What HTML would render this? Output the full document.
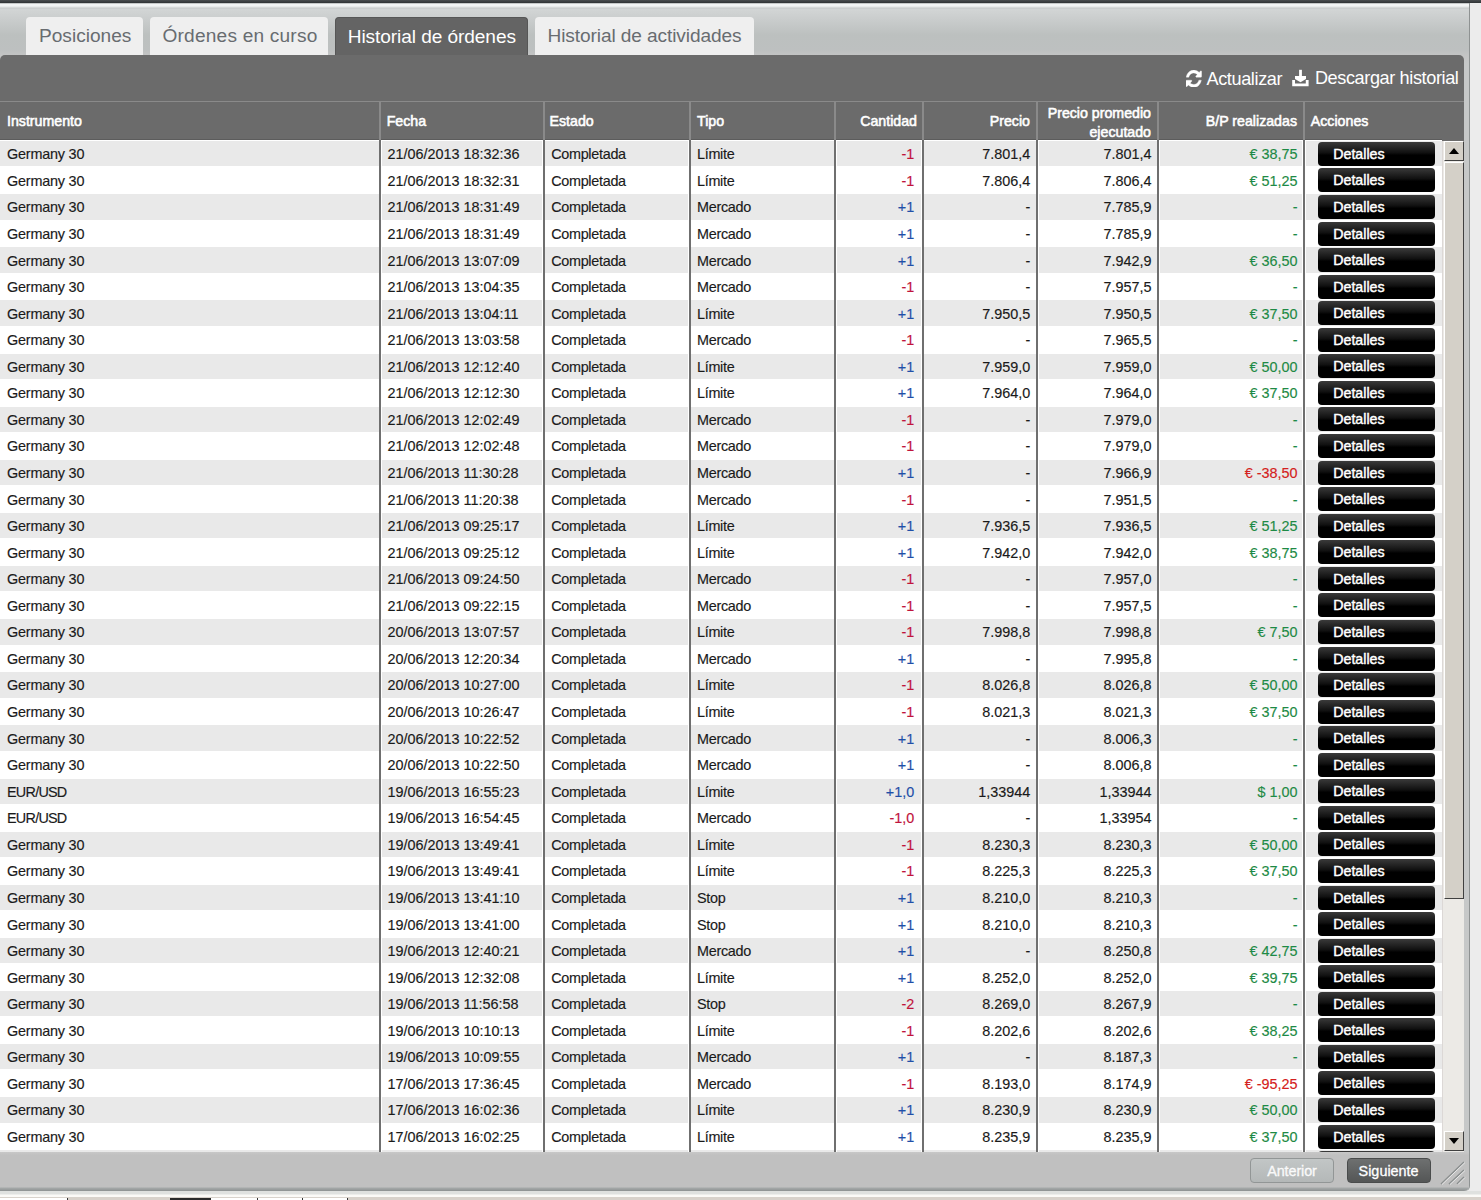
<!DOCTYPE html>
<html><head><meta charset="utf-8"><title>Historial de órdenes</title>
<style>
*{margin:0;padding:0;box-sizing:border-box}
html,body{width:1481px;height:1200px;overflow:hidden;background:#ececec;font-family:"Liberation Sans",sans-serif}
.abs{position:absolute}
#topbar{position:absolute;left:0;top:0;width:1481px;height:3px;background:linear-gradient(#4a4e50,#2f3335)}
#win{position:absolute;left:0;top:3px;width:1470px;height:1188px;background:linear-gradient(#9a9e9e 0,#f2f4f4 1px,#f2f4f4 3px,#d6d9d9 4.5px,#cbcece 5.5px,#d2d5d5 6.5px,#c9cccc 17px,#bcc0bf 32px,#bdc0c0 47px,#c3c4c4 52px,#c6c8c8 60px,#c6c8c8 100%);border-right:1px solid #8e9292;border-bottom-right-radius:5px}
#bottomstrip{position:absolute;left:0;top:1191px;width:1481px;height:9px;background:linear-gradient(#dfe1df 0,#dfe1df 3px,#fbfaf7 4px,#fbfaf7 6px,#d8d2cb 6.5px)}
.tab{position:absolute;top:17px;height:38px;background:#efefef;border-radius:4px 4px 0 0;color:#686c70;font-size:19.1px;line-height:38px;padding-left:12.5px;white-space:nowrap}
.tab.act{background:#646464;color:#fff;border:1px solid #565656;border-bottom:none;padding-left:12px;line-height:37px}
.tab.act:after{content:"";position:absolute;left:-1px;right:-1px;bottom:-1px;height:1.5px;background:#858585}
#panel{position:absolute;left:0;top:55px;width:1464px;height:1097px;background:#6b6b6b;border-radius:5px 5px 0 0}
.tool{position:absolute;top:66.5px;height:24px;color:#fff;font-size:18.1px;letter-spacing:-0.38px;line-height:24px;white-space:nowrap}
#hdrline{position:absolute;left:0;top:101px;width:1464px;height:1px;background:#8a8a8a}
.h{position:absolute;top:102px;height:38px;color:#fff;font-size:14.2px;-webkit-text-stroke:0.55px #fff;white-space:nowrap}
.h span{position:absolute;top:11px;line-height:17px}
#tbl{position:absolute;left:0;top:140px;width:1442px;height:1012px;overflow:hidden;background:#fff}
.r{position:absolute;left:0;width:1442px;height:26.56px;background:#fff}
.c{position:absolute;top:0.6px;height:25.36px}
.r.g .c{background:#e9e9e9}
.w{letter-spacing:-0.3px}
.t{position:absolute;top:1.2px;-webkit-text-stroke:0.15px;line-height:25.56px;font-size:14.4px;color:#1a1a1a;white-space:nowrap}
.neg{color:#c0143c}
.pos{color:#1f4fa8}
.grn{color:#1e8a45}
.red{color:#d42020}
.btn{position:absolute;left:12.8px;top:0.8px;width:116.5px;height:24px;border-radius:4px;background:linear-gradient(#3a3a3a 0,#101010 45%,#000 55%,#000 100%);color:#fff;font-size:14.2px;line-height:24px;padding-left:15px;-webkit-text-stroke:0.45px #fff;white-space:nowrap}
.dv{position:absolute;top:140px;width:2px;height:1012px;background:#6f6f6f}
.dvh{position:absolute;top:102px;width:2px;height:38px;background:#8a8a8a}
#sb{position:absolute;left:1442px;top:141px;width:22px;height:1011px;background:#eceae6;border-left:1px solid #dcd8d6}
.sbb{position:absolute;left:1px;width:20px;height:20px;background:#d4d0c8;border-top:1px solid #fff;border-left:1px solid #fff;border-right:1.5px solid #404040;border-bottom:1.5px solid #404040}
#thumb{position:absolute;left:1px;top:21px;width:20px;height:737px;background:#d4d0c8;border-top:1px solid #fff;border-left:1px solid #fff;border-right:1.5px solid #404040;border-bottom:1.5px solid #404040}
#footer{position:absolute;left:0;top:1152px;width:1469px;height:39px;background:linear-gradient(#c8c8c8 0,#c0c0c0 3px,#c0c0c0 35px,#a5a9a9 36px,#8d9191 39px);border-bottom-right-radius:5px}
.fb{position:absolute;top:6px;height:25px;border-radius:4px;font-size:14.4px;line-height:24.5px;text-align:center;color:#fff;-webkit-text-stroke:0.3px #fff}
</style></head><body>
<div id="topbar"></div>
<div id="win"></div>
<div id="bottomstrip"></div>
<div style="position:absolute;left:0;top:1197.5px;width:67px;height:3px;background:#fff"></div>
<div style="position:absolute;left:67px;top:1197.5px;width:1px;height:3px;background:#333"></div>
<div style="position:absolute;left:169.5px;top:1198px;width:41.5px;height:2px;background:#2b2b2b"></div>
<div style="position:absolute;left:211px;top:1197.5px;width:136px;height:3px;background:#fff"></div>
<div style="position:absolute;left:257px;top:1198px;width:1px;height:2px;background:#333"></div>
<div style="position:absolute;left:302px;top:1198px;width:1px;height:2px;background:#333"></div>
<div style="position:absolute;left:347px;top:1198px;width:1px;height:2px;background:#333"></div>
<div class="tab" style="left:25.8px;width:117.6px;padding-left:13.2px">Posiciones</div>
<div class="tab" style="left:150px;width:178px;letter-spacing:0.2px">Órdenes en curso</div>
<div class="tab act" style="left:334.7px;width:193px;letter-spacing:-0.08px">Historial de órdenes</div>
<div class="tab" style="left:535px;width:219px;letter-spacing:-0.1px">Historial de actividades</div>
<div id="panel"></div>
<div class="tool" style="left:1186px;width:100px">
 <svg style="position:absolute;left:0;top:3.6px" width="15.6" height="17.4" viewBox="0 0 1536 1536" preserveAspectRatio="none"><path fill="#fff" stroke="#fff" stroke-width="30" d="M1511 928q0 5-1 7-64 268-268 434.5t-478 166.5q-146 0-282.5-55t-243.5-157l-129 129q-19 19-45 19t-45-19-19-45v-448q0-26 19-45t45-19h448q26 0 45 19t19 45-19 45l-137 137q71 66 161 102t187 36q134 0 250-65t186-179q11-17 53-117 8-23 30-23h192q13 0 22.5 9.5t9.5 22.5zm25-800v448q0 26-19 45t-45 19h-448q-26 0-45-19t-19-45 19-45l138-138q-148-137-349-137-134 0-250 65t-186 179q-11 17-53 117-8 23-30 23h-199q-13 0-22.5-9.5t-9.5-22.5v-7q65-268 270-434.5t480-166.5q146 0 284 55.5t245 156.5l130-129q19-19 45-19t45 19 19 45z"/></svg>
 <span style="position:absolute;left:20.5px;top:0">Actualizar</span>
</div>
<div class="tool" style="left:1292px;width:170px;top:66px">
 <svg style="position:absolute;left:0;top:3px" width="18" height="19" viewBox="0 0 18 19"><rect x="7.1" y="0.8" width="2.8" height="7.5" fill="#fff"/><path d="M3 7h11v3l-5.5 3.2L3 10z" fill="#fff"/><path d="M0.2 11.1h2.8v3.4h10.8v-3.4h2.8v6.2H0.2z" fill="#fff"/></svg>
 <span style="position:absolute;right:3.5px;top:0">Descargar historial</span>
</div>
<div id="hdrline"></div><div style="position:absolute;left:0;top:139px;width:1442px;height:1px;background:#5c5c5c"></div>
<div class="h" style="left:0;width:379px"><span style="left:7px">Instrumento</span></div>
<div class="h" style="left:381px;width:162px"><span style="left:5.7px">Fecha</span></div>
<div class="h" style="left:545px;width:144px"><span style="left:4.5px">Estado</span></div>
<div class="h" style="left:691px;width:144px"><span style="left:6px">Tipo</span></div>
<div class="h" style="left:837px;width:85px"><span style="right:5px">Cantidad</span></div>
<div class="h" style="left:924px;width:113px"><span style="right:7px">Precio</span></div>
<div class="h" style="left:1039px;width:119px"><span style="right:7px;top:2px;text-align:right;line-height:19px">Precio promedio<br>ejecutado</span></div>
<div class="h" style="left:1160px;width:144px"><span style="right:7px">B/P realizadas</span></div>
<div class="h" style="left:1306px;width:136px"><span style="left:4.8px">Acciones</span></div>
<div id="tbl">
<div style="position:absolute;left:0;top:-140px;width:1442px;height:1300px">
<div class="r g" style="top:140.50px"><div class="c" style="left:0;width:379.0px"><span class="t" style="left:7px;letter-spacing:-0.2px">Germany 30</span></div><div class="c" style="left:381.5px;width:160.7px"><span class="t" style="left:6px">21/06/2013 18:32:36</span></div><div class="c" style="left:545.2px;width:142.8px"><span class="t w" style="left:6px">Completada</span></div><div class="c" style="left:691.0px;width:142.7px"><span class="t w" style="left:6px">Límite</span></div><div class="c" style="left:836.7px;width:84.5px"><span class="t rt neg" style="right:7px">-1</span></div><div class="c" style="left:924.2px;width:111.5px"><span class="t rt" style="right:5.5px">7.801,4</span></div><div class="c" style="left:1038.7px;width:117.9px"><span class="t rt" style="right:5px">7.801,4</span></div><div class="c" style="left:1159.6px;width:142.9px"><span class="t rt grn" style="right:5px">€ 38,75</span></div><div class="c" style="left:1305.5px;width:136.5px"><span class="btn">Detalles</span></div></div><div class="r" style="top:167.06px"><div class="c" style="left:0;width:379.0px"><span class="t" style="left:7px;letter-spacing:-0.2px">Germany 30</span></div><div class="c" style="left:381.5px;width:160.7px"><span class="t" style="left:6px">21/06/2013 18:32:31</span></div><div class="c" style="left:545.2px;width:142.8px"><span class="t w" style="left:6px">Completada</span></div><div class="c" style="left:691.0px;width:142.7px"><span class="t w" style="left:6px">Límite</span></div><div class="c" style="left:836.7px;width:84.5px"><span class="t rt neg" style="right:7px">-1</span></div><div class="c" style="left:924.2px;width:111.5px"><span class="t rt" style="right:5.5px">7.806,4</span></div><div class="c" style="left:1038.7px;width:117.9px"><span class="t rt" style="right:5px">7.806,4</span></div><div class="c" style="left:1159.6px;width:142.9px"><span class="t rt grn" style="right:5px">€ 51,25</span></div><div class="c" style="left:1305.5px;width:136.5px"><span class="btn">Detalles</span></div></div><div class="r g" style="top:193.62px"><div class="c" style="left:0;width:379.0px"><span class="t" style="left:7px;letter-spacing:-0.2px">Germany 30</span></div><div class="c" style="left:381.5px;width:160.7px"><span class="t" style="left:6px">21/06/2013 18:31:49</span></div><div class="c" style="left:545.2px;width:142.8px"><span class="t w" style="left:6px">Completada</span></div><div class="c" style="left:691.0px;width:142.7px"><span class="t w" style="left:6px">Mercado</span></div><div class="c" style="left:836.7px;width:84.5px"><span class="t rt pos" style="right:7px">+1</span></div><div class="c" style="left:924.2px;width:111.5px"><span class="t rt" style="right:5.5px">-</span></div><div class="c" style="left:1038.7px;width:117.9px"><span class="t rt" style="right:5px">7.785,9</span></div><div class="c" style="left:1159.6px;width:142.9px"><span class="t rt grn" style="right:5px">-</span></div><div class="c" style="left:1305.5px;width:136.5px"><span class="btn">Detalles</span></div></div><div class="r" style="top:220.18px"><div class="c" style="left:0;width:379.0px"><span class="t" style="left:7px;letter-spacing:-0.2px">Germany 30</span></div><div class="c" style="left:381.5px;width:160.7px"><span class="t" style="left:6px">21/06/2013 18:31:49</span></div><div class="c" style="left:545.2px;width:142.8px"><span class="t w" style="left:6px">Completada</span></div><div class="c" style="left:691.0px;width:142.7px"><span class="t w" style="left:6px">Mercado</span></div><div class="c" style="left:836.7px;width:84.5px"><span class="t rt pos" style="right:7px">+1</span></div><div class="c" style="left:924.2px;width:111.5px"><span class="t rt" style="right:5.5px">-</span></div><div class="c" style="left:1038.7px;width:117.9px"><span class="t rt" style="right:5px">7.785,9</span></div><div class="c" style="left:1159.6px;width:142.9px"><span class="t rt grn" style="right:5px">-</span></div><div class="c" style="left:1305.5px;width:136.5px"><span class="btn">Detalles</span></div></div><div class="r g" style="top:246.74px"><div class="c" style="left:0;width:379.0px"><span class="t" style="left:7px;letter-spacing:-0.2px">Germany 30</span></div><div class="c" style="left:381.5px;width:160.7px"><span class="t" style="left:6px">21/06/2013 13:07:09</span></div><div class="c" style="left:545.2px;width:142.8px"><span class="t w" style="left:6px">Completada</span></div><div class="c" style="left:691.0px;width:142.7px"><span class="t w" style="left:6px">Mercado</span></div><div class="c" style="left:836.7px;width:84.5px"><span class="t rt pos" style="right:7px">+1</span></div><div class="c" style="left:924.2px;width:111.5px"><span class="t rt" style="right:5.5px">-</span></div><div class="c" style="left:1038.7px;width:117.9px"><span class="t rt" style="right:5px">7.942,9</span></div><div class="c" style="left:1159.6px;width:142.9px"><span class="t rt grn" style="right:5px">€ 36,50</span></div><div class="c" style="left:1305.5px;width:136.5px"><span class="btn">Detalles</span></div></div><div class="r" style="top:273.30px"><div class="c" style="left:0;width:379.0px"><span class="t" style="left:7px;letter-spacing:-0.2px">Germany 30</span></div><div class="c" style="left:381.5px;width:160.7px"><span class="t" style="left:6px">21/06/2013 13:04:35</span></div><div class="c" style="left:545.2px;width:142.8px"><span class="t w" style="left:6px">Completada</span></div><div class="c" style="left:691.0px;width:142.7px"><span class="t w" style="left:6px">Mercado</span></div><div class="c" style="left:836.7px;width:84.5px"><span class="t rt neg" style="right:7px">-1</span></div><div class="c" style="left:924.2px;width:111.5px"><span class="t rt" style="right:5.5px">-</span></div><div class="c" style="left:1038.7px;width:117.9px"><span class="t rt" style="right:5px">7.957,5</span></div><div class="c" style="left:1159.6px;width:142.9px"><span class="t rt grn" style="right:5px">-</span></div><div class="c" style="left:1305.5px;width:136.5px"><span class="btn">Detalles</span></div></div><div class="r g" style="top:299.86px"><div class="c" style="left:0;width:379.0px"><span class="t" style="left:7px;letter-spacing:-0.2px">Germany 30</span></div><div class="c" style="left:381.5px;width:160.7px"><span class="t" style="left:6px">21/06/2013 13:04:11</span></div><div class="c" style="left:545.2px;width:142.8px"><span class="t w" style="left:6px">Completada</span></div><div class="c" style="left:691.0px;width:142.7px"><span class="t w" style="left:6px">Límite</span></div><div class="c" style="left:836.7px;width:84.5px"><span class="t rt pos" style="right:7px">+1</span></div><div class="c" style="left:924.2px;width:111.5px"><span class="t rt" style="right:5.5px">7.950,5</span></div><div class="c" style="left:1038.7px;width:117.9px"><span class="t rt" style="right:5px">7.950,5</span></div><div class="c" style="left:1159.6px;width:142.9px"><span class="t rt grn" style="right:5px">€ 37,50</span></div><div class="c" style="left:1305.5px;width:136.5px"><span class="btn">Detalles</span></div></div><div class="r" style="top:326.42px"><div class="c" style="left:0;width:379.0px"><span class="t" style="left:7px;letter-spacing:-0.2px">Germany 30</span></div><div class="c" style="left:381.5px;width:160.7px"><span class="t" style="left:6px">21/06/2013 13:03:58</span></div><div class="c" style="left:545.2px;width:142.8px"><span class="t w" style="left:6px">Completada</span></div><div class="c" style="left:691.0px;width:142.7px"><span class="t w" style="left:6px">Mercado</span></div><div class="c" style="left:836.7px;width:84.5px"><span class="t rt neg" style="right:7px">-1</span></div><div class="c" style="left:924.2px;width:111.5px"><span class="t rt" style="right:5.5px">-</span></div><div class="c" style="left:1038.7px;width:117.9px"><span class="t rt" style="right:5px">7.965,5</span></div><div class="c" style="left:1159.6px;width:142.9px"><span class="t rt grn" style="right:5px">-</span></div><div class="c" style="left:1305.5px;width:136.5px"><span class="btn">Detalles</span></div></div><div class="r g" style="top:352.98px"><div class="c" style="left:0;width:379.0px"><span class="t" style="left:7px;letter-spacing:-0.2px">Germany 30</span></div><div class="c" style="left:381.5px;width:160.7px"><span class="t" style="left:6px">21/06/2013 12:12:40</span></div><div class="c" style="left:545.2px;width:142.8px"><span class="t w" style="left:6px">Completada</span></div><div class="c" style="left:691.0px;width:142.7px"><span class="t w" style="left:6px">Límite</span></div><div class="c" style="left:836.7px;width:84.5px"><span class="t rt pos" style="right:7px">+1</span></div><div class="c" style="left:924.2px;width:111.5px"><span class="t rt" style="right:5.5px">7.959,0</span></div><div class="c" style="left:1038.7px;width:117.9px"><span class="t rt" style="right:5px">7.959,0</span></div><div class="c" style="left:1159.6px;width:142.9px"><span class="t rt grn" style="right:5px">€ 50,00</span></div><div class="c" style="left:1305.5px;width:136.5px"><span class="btn">Detalles</span></div></div><div class="r" style="top:379.54px"><div class="c" style="left:0;width:379.0px"><span class="t" style="left:7px;letter-spacing:-0.2px">Germany 30</span></div><div class="c" style="left:381.5px;width:160.7px"><span class="t" style="left:6px">21/06/2013 12:12:30</span></div><div class="c" style="left:545.2px;width:142.8px"><span class="t w" style="left:6px">Completada</span></div><div class="c" style="left:691.0px;width:142.7px"><span class="t w" style="left:6px">Límite</span></div><div class="c" style="left:836.7px;width:84.5px"><span class="t rt pos" style="right:7px">+1</span></div><div class="c" style="left:924.2px;width:111.5px"><span class="t rt" style="right:5.5px">7.964,0</span></div><div class="c" style="left:1038.7px;width:117.9px"><span class="t rt" style="right:5px">7.964,0</span></div><div class="c" style="left:1159.6px;width:142.9px"><span class="t rt grn" style="right:5px">€ 37,50</span></div><div class="c" style="left:1305.5px;width:136.5px"><span class="btn">Detalles</span></div></div><div class="r g" style="top:406.10px"><div class="c" style="left:0;width:379.0px"><span class="t" style="left:7px;letter-spacing:-0.2px">Germany 30</span></div><div class="c" style="left:381.5px;width:160.7px"><span class="t" style="left:6px">21/06/2013 12:02:49</span></div><div class="c" style="left:545.2px;width:142.8px"><span class="t w" style="left:6px">Completada</span></div><div class="c" style="left:691.0px;width:142.7px"><span class="t w" style="left:6px">Mercado</span></div><div class="c" style="left:836.7px;width:84.5px"><span class="t rt neg" style="right:7px">-1</span></div><div class="c" style="left:924.2px;width:111.5px"><span class="t rt" style="right:5.5px">-</span></div><div class="c" style="left:1038.7px;width:117.9px"><span class="t rt" style="right:5px">7.979,0</span></div><div class="c" style="left:1159.6px;width:142.9px"><span class="t rt grn" style="right:5px">-</span></div><div class="c" style="left:1305.5px;width:136.5px"><span class="btn">Detalles</span></div></div><div class="r" style="top:432.66px"><div class="c" style="left:0;width:379.0px"><span class="t" style="left:7px;letter-spacing:-0.2px">Germany 30</span></div><div class="c" style="left:381.5px;width:160.7px"><span class="t" style="left:6px">21/06/2013 12:02:48</span></div><div class="c" style="left:545.2px;width:142.8px"><span class="t w" style="left:6px">Completada</span></div><div class="c" style="left:691.0px;width:142.7px"><span class="t w" style="left:6px">Mercado</span></div><div class="c" style="left:836.7px;width:84.5px"><span class="t rt neg" style="right:7px">-1</span></div><div class="c" style="left:924.2px;width:111.5px"><span class="t rt" style="right:5.5px">-</span></div><div class="c" style="left:1038.7px;width:117.9px"><span class="t rt" style="right:5px">7.979,0</span></div><div class="c" style="left:1159.6px;width:142.9px"><span class="t rt grn" style="right:5px">-</span></div><div class="c" style="left:1305.5px;width:136.5px"><span class="btn">Detalles</span></div></div><div class="r g" style="top:459.22px"><div class="c" style="left:0;width:379.0px"><span class="t" style="left:7px;letter-spacing:-0.2px">Germany 30</span></div><div class="c" style="left:381.5px;width:160.7px"><span class="t" style="left:6px">21/06/2013 11:30:28</span></div><div class="c" style="left:545.2px;width:142.8px"><span class="t w" style="left:6px">Completada</span></div><div class="c" style="left:691.0px;width:142.7px"><span class="t w" style="left:6px">Mercado</span></div><div class="c" style="left:836.7px;width:84.5px"><span class="t rt pos" style="right:7px">+1</span></div><div class="c" style="left:924.2px;width:111.5px"><span class="t rt" style="right:5.5px">-</span></div><div class="c" style="left:1038.7px;width:117.9px"><span class="t rt" style="right:5px">7.966,9</span></div><div class="c" style="left:1159.6px;width:142.9px"><span class="t rt red" style="right:5px">€ -38,50</span></div><div class="c" style="left:1305.5px;width:136.5px"><span class="btn">Detalles</span></div></div><div class="r" style="top:485.78px"><div class="c" style="left:0;width:379.0px"><span class="t" style="left:7px;letter-spacing:-0.2px">Germany 30</span></div><div class="c" style="left:381.5px;width:160.7px"><span class="t" style="left:6px">21/06/2013 11:20:38</span></div><div class="c" style="left:545.2px;width:142.8px"><span class="t w" style="left:6px">Completada</span></div><div class="c" style="left:691.0px;width:142.7px"><span class="t w" style="left:6px">Mercado</span></div><div class="c" style="left:836.7px;width:84.5px"><span class="t rt neg" style="right:7px">-1</span></div><div class="c" style="left:924.2px;width:111.5px"><span class="t rt" style="right:5.5px">-</span></div><div class="c" style="left:1038.7px;width:117.9px"><span class="t rt" style="right:5px">7.951,5</span></div><div class="c" style="left:1159.6px;width:142.9px"><span class="t rt grn" style="right:5px">-</span></div><div class="c" style="left:1305.5px;width:136.5px"><span class="btn">Detalles</span></div></div><div class="r g" style="top:512.34px"><div class="c" style="left:0;width:379.0px"><span class="t" style="left:7px;letter-spacing:-0.2px">Germany 30</span></div><div class="c" style="left:381.5px;width:160.7px"><span class="t" style="left:6px">21/06/2013 09:25:17</span></div><div class="c" style="left:545.2px;width:142.8px"><span class="t w" style="left:6px">Completada</span></div><div class="c" style="left:691.0px;width:142.7px"><span class="t w" style="left:6px">Límite</span></div><div class="c" style="left:836.7px;width:84.5px"><span class="t rt pos" style="right:7px">+1</span></div><div class="c" style="left:924.2px;width:111.5px"><span class="t rt" style="right:5.5px">7.936,5</span></div><div class="c" style="left:1038.7px;width:117.9px"><span class="t rt" style="right:5px">7.936,5</span></div><div class="c" style="left:1159.6px;width:142.9px"><span class="t rt grn" style="right:5px">€ 51,25</span></div><div class="c" style="left:1305.5px;width:136.5px"><span class="btn">Detalles</span></div></div><div class="r" style="top:538.90px"><div class="c" style="left:0;width:379.0px"><span class="t" style="left:7px;letter-spacing:-0.2px">Germany 30</span></div><div class="c" style="left:381.5px;width:160.7px"><span class="t" style="left:6px">21/06/2013 09:25:12</span></div><div class="c" style="left:545.2px;width:142.8px"><span class="t w" style="left:6px">Completada</span></div><div class="c" style="left:691.0px;width:142.7px"><span class="t w" style="left:6px">Límite</span></div><div class="c" style="left:836.7px;width:84.5px"><span class="t rt pos" style="right:7px">+1</span></div><div class="c" style="left:924.2px;width:111.5px"><span class="t rt" style="right:5.5px">7.942,0</span></div><div class="c" style="left:1038.7px;width:117.9px"><span class="t rt" style="right:5px">7.942,0</span></div><div class="c" style="left:1159.6px;width:142.9px"><span class="t rt grn" style="right:5px">€ 38,75</span></div><div class="c" style="left:1305.5px;width:136.5px"><span class="btn">Detalles</span></div></div><div class="r g" style="top:565.46px"><div class="c" style="left:0;width:379.0px"><span class="t" style="left:7px;letter-spacing:-0.2px">Germany 30</span></div><div class="c" style="left:381.5px;width:160.7px"><span class="t" style="left:6px">21/06/2013 09:24:50</span></div><div class="c" style="left:545.2px;width:142.8px"><span class="t w" style="left:6px">Completada</span></div><div class="c" style="left:691.0px;width:142.7px"><span class="t w" style="left:6px">Mercado</span></div><div class="c" style="left:836.7px;width:84.5px"><span class="t rt neg" style="right:7px">-1</span></div><div class="c" style="left:924.2px;width:111.5px"><span class="t rt" style="right:5.5px">-</span></div><div class="c" style="left:1038.7px;width:117.9px"><span class="t rt" style="right:5px">7.957,0</span></div><div class="c" style="left:1159.6px;width:142.9px"><span class="t rt grn" style="right:5px">-</span></div><div class="c" style="left:1305.5px;width:136.5px"><span class="btn">Detalles</span></div></div><div class="r" style="top:592.02px"><div class="c" style="left:0;width:379.0px"><span class="t" style="left:7px;letter-spacing:-0.2px">Germany 30</span></div><div class="c" style="left:381.5px;width:160.7px"><span class="t" style="left:6px">21/06/2013 09:22:15</span></div><div class="c" style="left:545.2px;width:142.8px"><span class="t w" style="left:6px">Completada</span></div><div class="c" style="left:691.0px;width:142.7px"><span class="t w" style="left:6px">Mercado</span></div><div class="c" style="left:836.7px;width:84.5px"><span class="t rt neg" style="right:7px">-1</span></div><div class="c" style="left:924.2px;width:111.5px"><span class="t rt" style="right:5.5px">-</span></div><div class="c" style="left:1038.7px;width:117.9px"><span class="t rt" style="right:5px">7.957,5</span></div><div class="c" style="left:1159.6px;width:142.9px"><span class="t rt grn" style="right:5px">-</span></div><div class="c" style="left:1305.5px;width:136.5px"><span class="btn">Detalles</span></div></div><div class="r g" style="top:618.58px"><div class="c" style="left:0;width:379.0px"><span class="t" style="left:7px;letter-spacing:-0.2px">Germany 30</span></div><div class="c" style="left:381.5px;width:160.7px"><span class="t" style="left:6px">20/06/2013 13:07:57</span></div><div class="c" style="left:545.2px;width:142.8px"><span class="t w" style="left:6px">Completada</span></div><div class="c" style="left:691.0px;width:142.7px"><span class="t w" style="left:6px">Límite</span></div><div class="c" style="left:836.7px;width:84.5px"><span class="t rt neg" style="right:7px">-1</span></div><div class="c" style="left:924.2px;width:111.5px"><span class="t rt" style="right:5.5px">7.998,8</span></div><div class="c" style="left:1038.7px;width:117.9px"><span class="t rt" style="right:5px">7.998,8</span></div><div class="c" style="left:1159.6px;width:142.9px"><span class="t rt grn" style="right:5px">€ 7,50</span></div><div class="c" style="left:1305.5px;width:136.5px"><span class="btn">Detalles</span></div></div><div class="r" style="top:645.14px"><div class="c" style="left:0;width:379.0px"><span class="t" style="left:7px;letter-spacing:-0.2px">Germany 30</span></div><div class="c" style="left:381.5px;width:160.7px"><span class="t" style="left:6px">20/06/2013 12:20:34</span></div><div class="c" style="left:545.2px;width:142.8px"><span class="t w" style="left:6px">Completada</span></div><div class="c" style="left:691.0px;width:142.7px"><span class="t w" style="left:6px">Mercado</span></div><div class="c" style="left:836.7px;width:84.5px"><span class="t rt pos" style="right:7px">+1</span></div><div class="c" style="left:924.2px;width:111.5px"><span class="t rt" style="right:5.5px">-</span></div><div class="c" style="left:1038.7px;width:117.9px"><span class="t rt" style="right:5px">7.995,8</span></div><div class="c" style="left:1159.6px;width:142.9px"><span class="t rt grn" style="right:5px">-</span></div><div class="c" style="left:1305.5px;width:136.5px"><span class="btn">Detalles</span></div></div><div class="r g" style="top:671.70px"><div class="c" style="left:0;width:379.0px"><span class="t" style="left:7px;letter-spacing:-0.2px">Germany 30</span></div><div class="c" style="left:381.5px;width:160.7px"><span class="t" style="left:6px">20/06/2013 10:27:00</span></div><div class="c" style="left:545.2px;width:142.8px"><span class="t w" style="left:6px">Completada</span></div><div class="c" style="left:691.0px;width:142.7px"><span class="t w" style="left:6px">Límite</span></div><div class="c" style="left:836.7px;width:84.5px"><span class="t rt neg" style="right:7px">-1</span></div><div class="c" style="left:924.2px;width:111.5px"><span class="t rt" style="right:5.5px">8.026,8</span></div><div class="c" style="left:1038.7px;width:117.9px"><span class="t rt" style="right:5px">8.026,8</span></div><div class="c" style="left:1159.6px;width:142.9px"><span class="t rt grn" style="right:5px">€ 50,00</span></div><div class="c" style="left:1305.5px;width:136.5px"><span class="btn">Detalles</span></div></div><div class="r" style="top:698.26px"><div class="c" style="left:0;width:379.0px"><span class="t" style="left:7px;letter-spacing:-0.2px">Germany 30</span></div><div class="c" style="left:381.5px;width:160.7px"><span class="t" style="left:6px">20/06/2013 10:26:47</span></div><div class="c" style="left:545.2px;width:142.8px"><span class="t w" style="left:6px">Completada</span></div><div class="c" style="left:691.0px;width:142.7px"><span class="t w" style="left:6px">Límite</span></div><div class="c" style="left:836.7px;width:84.5px"><span class="t rt neg" style="right:7px">-1</span></div><div class="c" style="left:924.2px;width:111.5px"><span class="t rt" style="right:5.5px">8.021,3</span></div><div class="c" style="left:1038.7px;width:117.9px"><span class="t rt" style="right:5px">8.021,3</span></div><div class="c" style="left:1159.6px;width:142.9px"><span class="t rt grn" style="right:5px">€ 37,50</span></div><div class="c" style="left:1305.5px;width:136.5px"><span class="btn">Detalles</span></div></div><div class="r g" style="top:724.82px"><div class="c" style="left:0;width:379.0px"><span class="t" style="left:7px;letter-spacing:-0.2px">Germany 30</span></div><div class="c" style="left:381.5px;width:160.7px"><span class="t" style="left:6px">20/06/2013 10:22:52</span></div><div class="c" style="left:545.2px;width:142.8px"><span class="t w" style="left:6px">Completada</span></div><div class="c" style="left:691.0px;width:142.7px"><span class="t w" style="left:6px">Mercado</span></div><div class="c" style="left:836.7px;width:84.5px"><span class="t rt pos" style="right:7px">+1</span></div><div class="c" style="left:924.2px;width:111.5px"><span class="t rt" style="right:5.5px">-</span></div><div class="c" style="left:1038.7px;width:117.9px"><span class="t rt" style="right:5px">8.006,3</span></div><div class="c" style="left:1159.6px;width:142.9px"><span class="t rt grn" style="right:5px">-</span></div><div class="c" style="left:1305.5px;width:136.5px"><span class="btn">Detalles</span></div></div><div class="r" style="top:751.38px"><div class="c" style="left:0;width:379.0px"><span class="t" style="left:7px;letter-spacing:-0.2px">Germany 30</span></div><div class="c" style="left:381.5px;width:160.7px"><span class="t" style="left:6px">20/06/2013 10:22:50</span></div><div class="c" style="left:545.2px;width:142.8px"><span class="t w" style="left:6px">Completada</span></div><div class="c" style="left:691.0px;width:142.7px"><span class="t w" style="left:6px">Mercado</span></div><div class="c" style="left:836.7px;width:84.5px"><span class="t rt pos" style="right:7px">+1</span></div><div class="c" style="left:924.2px;width:111.5px"><span class="t rt" style="right:5.5px">-</span></div><div class="c" style="left:1038.7px;width:117.9px"><span class="t rt" style="right:5px">8.006,8</span></div><div class="c" style="left:1159.6px;width:142.9px"><span class="t rt grn" style="right:5px">-</span></div><div class="c" style="left:1305.5px;width:136.5px"><span class="btn">Detalles</span></div></div><div class="r g" style="top:777.94px"><div class="c" style="left:0;width:379.0px"><span class="t" style="left:7px;letter-spacing:-0.75px">EUR/USD</span></div><div class="c" style="left:381.5px;width:160.7px"><span class="t" style="left:6px">19/06/2013 16:55:23</span></div><div class="c" style="left:545.2px;width:142.8px"><span class="t w" style="left:6px">Completada</span></div><div class="c" style="left:691.0px;width:142.7px"><span class="t w" style="left:6px">Límite</span></div><div class="c" style="left:836.7px;width:84.5px"><span class="t rt pos" style="right:7px">+1,0</span></div><div class="c" style="left:924.2px;width:111.5px"><span class="t rt" style="right:5.5px">1,33944</span></div><div class="c" style="left:1038.7px;width:117.9px"><span class="t rt" style="right:5px">1,33944</span></div><div class="c" style="left:1159.6px;width:142.9px"><span class="t rt grn" style="right:5px">$ 1,00</span></div><div class="c" style="left:1305.5px;width:136.5px"><span class="btn">Detalles</span></div></div><div class="r" style="top:804.50px"><div class="c" style="left:0;width:379.0px"><span class="t" style="left:7px;letter-spacing:-0.75px">EUR/USD</span></div><div class="c" style="left:381.5px;width:160.7px"><span class="t" style="left:6px">19/06/2013 16:54:45</span></div><div class="c" style="left:545.2px;width:142.8px"><span class="t w" style="left:6px">Completada</span></div><div class="c" style="left:691.0px;width:142.7px"><span class="t w" style="left:6px">Mercado</span></div><div class="c" style="left:836.7px;width:84.5px"><span class="t rt neg" style="right:7px">-1,0</span></div><div class="c" style="left:924.2px;width:111.5px"><span class="t rt" style="right:5.5px">-</span></div><div class="c" style="left:1038.7px;width:117.9px"><span class="t rt" style="right:5px">1,33954</span></div><div class="c" style="left:1159.6px;width:142.9px"><span class="t rt grn" style="right:5px">-</span></div><div class="c" style="left:1305.5px;width:136.5px"><span class="btn">Detalles</span></div></div><div class="r g" style="top:831.06px"><div class="c" style="left:0;width:379.0px"><span class="t" style="left:7px;letter-spacing:-0.2px">Germany 30</span></div><div class="c" style="left:381.5px;width:160.7px"><span class="t" style="left:6px">19/06/2013 13:49:41</span></div><div class="c" style="left:545.2px;width:142.8px"><span class="t w" style="left:6px">Completada</span></div><div class="c" style="left:691.0px;width:142.7px"><span class="t w" style="left:6px">Límite</span></div><div class="c" style="left:836.7px;width:84.5px"><span class="t rt neg" style="right:7px">-1</span></div><div class="c" style="left:924.2px;width:111.5px"><span class="t rt" style="right:5.5px">8.230,3</span></div><div class="c" style="left:1038.7px;width:117.9px"><span class="t rt" style="right:5px">8.230,3</span></div><div class="c" style="left:1159.6px;width:142.9px"><span class="t rt grn" style="right:5px">€ 50,00</span></div><div class="c" style="left:1305.5px;width:136.5px"><span class="btn">Detalles</span></div></div><div class="r" style="top:857.62px"><div class="c" style="left:0;width:379.0px"><span class="t" style="left:7px;letter-spacing:-0.2px">Germany 30</span></div><div class="c" style="left:381.5px;width:160.7px"><span class="t" style="left:6px">19/06/2013 13:49:41</span></div><div class="c" style="left:545.2px;width:142.8px"><span class="t w" style="left:6px">Completada</span></div><div class="c" style="left:691.0px;width:142.7px"><span class="t w" style="left:6px">Límite</span></div><div class="c" style="left:836.7px;width:84.5px"><span class="t rt neg" style="right:7px">-1</span></div><div class="c" style="left:924.2px;width:111.5px"><span class="t rt" style="right:5.5px">8.225,3</span></div><div class="c" style="left:1038.7px;width:117.9px"><span class="t rt" style="right:5px">8.225,3</span></div><div class="c" style="left:1159.6px;width:142.9px"><span class="t rt grn" style="right:5px">€ 37,50</span></div><div class="c" style="left:1305.5px;width:136.5px"><span class="btn">Detalles</span></div></div><div class="r g" style="top:884.18px"><div class="c" style="left:0;width:379.0px"><span class="t" style="left:7px;letter-spacing:-0.2px">Germany 30</span></div><div class="c" style="left:381.5px;width:160.7px"><span class="t" style="left:6px">19/06/2013 13:41:10</span></div><div class="c" style="left:545.2px;width:142.8px"><span class="t w" style="left:6px">Completada</span></div><div class="c" style="left:691.0px;width:142.7px"><span class="t w" style="left:6px">Stop</span></div><div class="c" style="left:836.7px;width:84.5px"><span class="t rt pos" style="right:7px">+1</span></div><div class="c" style="left:924.2px;width:111.5px"><span class="t rt" style="right:5.5px">8.210,0</span></div><div class="c" style="left:1038.7px;width:117.9px"><span class="t rt" style="right:5px">8.210,3</span></div><div class="c" style="left:1159.6px;width:142.9px"><span class="t rt grn" style="right:5px">-</span></div><div class="c" style="left:1305.5px;width:136.5px"><span class="btn">Detalles</span></div></div><div class="r" style="top:910.74px"><div class="c" style="left:0;width:379.0px"><span class="t" style="left:7px;letter-spacing:-0.2px">Germany 30</span></div><div class="c" style="left:381.5px;width:160.7px"><span class="t" style="left:6px">19/06/2013 13:41:00</span></div><div class="c" style="left:545.2px;width:142.8px"><span class="t w" style="left:6px">Completada</span></div><div class="c" style="left:691.0px;width:142.7px"><span class="t w" style="left:6px">Stop</span></div><div class="c" style="left:836.7px;width:84.5px"><span class="t rt pos" style="right:7px">+1</span></div><div class="c" style="left:924.2px;width:111.5px"><span class="t rt" style="right:5.5px">8.210,0</span></div><div class="c" style="left:1038.7px;width:117.9px"><span class="t rt" style="right:5px">8.210,3</span></div><div class="c" style="left:1159.6px;width:142.9px"><span class="t rt grn" style="right:5px">-</span></div><div class="c" style="left:1305.5px;width:136.5px"><span class="btn">Detalles</span></div></div><div class="r g" style="top:937.30px"><div class="c" style="left:0;width:379.0px"><span class="t" style="left:7px;letter-spacing:-0.2px">Germany 30</span></div><div class="c" style="left:381.5px;width:160.7px"><span class="t" style="left:6px">19/06/2013 12:40:21</span></div><div class="c" style="left:545.2px;width:142.8px"><span class="t w" style="left:6px">Completada</span></div><div class="c" style="left:691.0px;width:142.7px"><span class="t w" style="left:6px">Mercado</span></div><div class="c" style="left:836.7px;width:84.5px"><span class="t rt pos" style="right:7px">+1</span></div><div class="c" style="left:924.2px;width:111.5px"><span class="t rt" style="right:5.5px">-</span></div><div class="c" style="left:1038.7px;width:117.9px"><span class="t rt" style="right:5px">8.250,8</span></div><div class="c" style="left:1159.6px;width:142.9px"><span class="t rt grn" style="right:5px">€ 42,75</span></div><div class="c" style="left:1305.5px;width:136.5px"><span class="btn">Detalles</span></div></div><div class="r" style="top:963.86px"><div class="c" style="left:0;width:379.0px"><span class="t" style="left:7px;letter-spacing:-0.2px">Germany 30</span></div><div class="c" style="left:381.5px;width:160.7px"><span class="t" style="left:6px">19/06/2013 12:32:08</span></div><div class="c" style="left:545.2px;width:142.8px"><span class="t w" style="left:6px">Completada</span></div><div class="c" style="left:691.0px;width:142.7px"><span class="t w" style="left:6px">Límite</span></div><div class="c" style="left:836.7px;width:84.5px"><span class="t rt pos" style="right:7px">+1</span></div><div class="c" style="left:924.2px;width:111.5px"><span class="t rt" style="right:5.5px">8.252,0</span></div><div class="c" style="left:1038.7px;width:117.9px"><span class="t rt" style="right:5px">8.252,0</span></div><div class="c" style="left:1159.6px;width:142.9px"><span class="t rt grn" style="right:5px">€ 39,75</span></div><div class="c" style="left:1305.5px;width:136.5px"><span class="btn">Detalles</span></div></div><div class="r g" style="top:990.42px"><div class="c" style="left:0;width:379.0px"><span class="t" style="left:7px;letter-spacing:-0.2px">Germany 30</span></div><div class="c" style="left:381.5px;width:160.7px"><span class="t" style="left:6px">19/06/2013 11:56:58</span></div><div class="c" style="left:545.2px;width:142.8px"><span class="t w" style="left:6px">Completada</span></div><div class="c" style="left:691.0px;width:142.7px"><span class="t w" style="left:6px">Stop</span></div><div class="c" style="left:836.7px;width:84.5px"><span class="t rt neg" style="right:7px">-2</span></div><div class="c" style="left:924.2px;width:111.5px"><span class="t rt" style="right:5.5px">8.269,0</span></div><div class="c" style="left:1038.7px;width:117.9px"><span class="t rt" style="right:5px">8.267,9</span></div><div class="c" style="left:1159.6px;width:142.9px"><span class="t rt grn" style="right:5px">-</span></div><div class="c" style="left:1305.5px;width:136.5px"><span class="btn">Detalles</span></div></div><div class="r" style="top:1016.98px"><div class="c" style="left:0;width:379.0px"><span class="t" style="left:7px;letter-spacing:-0.2px">Germany 30</span></div><div class="c" style="left:381.5px;width:160.7px"><span class="t" style="left:6px">19/06/2013 10:10:13</span></div><div class="c" style="left:545.2px;width:142.8px"><span class="t w" style="left:6px">Completada</span></div><div class="c" style="left:691.0px;width:142.7px"><span class="t w" style="left:6px">Límite</span></div><div class="c" style="left:836.7px;width:84.5px"><span class="t rt neg" style="right:7px">-1</span></div><div class="c" style="left:924.2px;width:111.5px"><span class="t rt" style="right:5.5px">8.202,6</span></div><div class="c" style="left:1038.7px;width:117.9px"><span class="t rt" style="right:5px">8.202,6</span></div><div class="c" style="left:1159.6px;width:142.9px"><span class="t rt grn" style="right:5px">€ 38,25</span></div><div class="c" style="left:1305.5px;width:136.5px"><span class="btn">Detalles</span></div></div><div class="r g" style="top:1043.54px"><div class="c" style="left:0;width:379.0px"><span class="t" style="left:7px;letter-spacing:-0.2px">Germany 30</span></div><div class="c" style="left:381.5px;width:160.7px"><span class="t" style="left:6px">19/06/2013 10:09:55</span></div><div class="c" style="left:545.2px;width:142.8px"><span class="t w" style="left:6px">Completada</span></div><div class="c" style="left:691.0px;width:142.7px"><span class="t w" style="left:6px">Mercado</span></div><div class="c" style="left:836.7px;width:84.5px"><span class="t rt pos" style="right:7px">+1</span></div><div class="c" style="left:924.2px;width:111.5px"><span class="t rt" style="right:5.5px">-</span></div><div class="c" style="left:1038.7px;width:117.9px"><span class="t rt" style="right:5px">8.187,3</span></div><div class="c" style="left:1159.6px;width:142.9px"><span class="t rt grn" style="right:5px">-</span></div><div class="c" style="left:1305.5px;width:136.5px"><span class="btn">Detalles</span></div></div><div class="r" style="top:1070.10px"><div class="c" style="left:0;width:379.0px"><span class="t" style="left:7px;letter-spacing:-0.2px">Germany 30</span></div><div class="c" style="left:381.5px;width:160.7px"><span class="t" style="left:6px">17/06/2013 17:36:45</span></div><div class="c" style="left:545.2px;width:142.8px"><span class="t w" style="left:6px">Completada</span></div><div class="c" style="left:691.0px;width:142.7px"><span class="t w" style="left:6px">Mercado</span></div><div class="c" style="left:836.7px;width:84.5px"><span class="t rt neg" style="right:7px">-1</span></div><div class="c" style="left:924.2px;width:111.5px"><span class="t rt" style="right:5.5px">8.193,0</span></div><div class="c" style="left:1038.7px;width:117.9px"><span class="t rt" style="right:5px">8.174,9</span></div><div class="c" style="left:1159.6px;width:142.9px"><span class="t rt red" style="right:5px">€ -95,25</span></div><div class="c" style="left:1305.5px;width:136.5px"><span class="btn">Detalles</span></div></div><div class="r g" style="top:1096.66px"><div class="c" style="left:0;width:379.0px"><span class="t" style="left:7px;letter-spacing:-0.2px">Germany 30</span></div><div class="c" style="left:381.5px;width:160.7px"><span class="t" style="left:6px">17/06/2013 16:02:36</span></div><div class="c" style="left:545.2px;width:142.8px"><span class="t w" style="left:6px">Completada</span></div><div class="c" style="left:691.0px;width:142.7px"><span class="t w" style="left:6px">Límite</span></div><div class="c" style="left:836.7px;width:84.5px"><span class="t rt pos" style="right:7px">+1</span></div><div class="c" style="left:924.2px;width:111.5px"><span class="t rt" style="right:5.5px">8.230,9</span></div><div class="c" style="left:1038.7px;width:117.9px"><span class="t rt" style="right:5px">8.230,9</span></div><div class="c" style="left:1159.6px;width:142.9px"><span class="t rt grn" style="right:5px">€ 50,00</span></div><div class="c" style="left:1305.5px;width:136.5px"><span class="btn">Detalles</span></div></div><div class="r" style="top:1123.22px"><div class="c" style="left:0;width:379.0px"><span class="t" style="left:7px;letter-spacing:-0.2px">Germany 30</span></div><div class="c" style="left:381.5px;width:160.7px"><span class="t" style="left:6px">17/06/2013 16:02:25</span></div><div class="c" style="left:545.2px;width:142.8px"><span class="t w" style="left:6px">Completada</span></div><div class="c" style="left:691.0px;width:142.7px"><span class="t w" style="left:6px">Límite</span></div><div class="c" style="left:836.7px;width:84.5px"><span class="t rt pos" style="right:7px">+1</span></div><div class="c" style="left:924.2px;width:111.5px"><span class="t rt" style="right:5.5px">8.235,9</span></div><div class="c" style="left:1038.7px;width:117.9px"><span class="t rt" style="right:5px">8.235,9</span></div><div class="c" style="left:1159.6px;width:142.9px"><span class="t rt grn" style="right:5px">€ 37,50</span></div><div class="c" style="left:1305.5px;width:136.5px"><span class="btn">Detalles</span></div></div><div class="r g" style="top:1149.78px"><div class="c" style="left:0;width:379.0px"><span class="t" style="left:7px;letter-spacing:-0.2px">Germany 30</span></div><div class="c" style="left:381.5px;width:160.7px"><span class="t" style="left:6px">17/06/2013 16:02:20</span></div><div class="c" style="left:545.2px;width:142.8px"><span class="t w" style="left:6px">Completada</span></div><div class="c" style="left:691.0px;width:142.7px"><span class="t w" style="left:6px">Límite</span></div><div class="c" style="left:836.7px;width:84.5px"><span class="t rt pos" style="right:7px">+1</span></div><div class="c" style="left:924.2px;width:111.5px"><span class="t rt" style="right:5.5px">8.235,9</span></div><div class="c" style="left:1038.7px;width:117.9px"><span class="t rt" style="right:5px">8.235,9</span></div><div class="c" style="left:1159.6px;width:142.9px"><span class="t rt grn" style="right:5px">€ 37,50</span></div><div class="c" style="left:1305.5px;width:136.5px"><span class="btn">Detalles</span></div></div>
</div>
</div>
<div class="dv" style="left:379.0px"></div><div class="dvh" style="left:379.0px"></div><div class="dv" style="left:542.7px"></div><div class="dvh" style="left:542.7px"></div><div class="dv" style="left:688.5px"></div><div class="dvh" style="left:688.5px"></div><div class="dv" style="left:834.2px"></div><div class="dvh" style="left:834.2px"></div><div class="dv" style="left:921.7px"></div><div class="dvh" style="left:921.7px"></div><div class="dv" style="left:1036.2px"></div><div class="dvh" style="left:1036.2px"></div><div class="dv" style="left:1157.1px"></div><div class="dvh" style="left:1157.1px"></div><div class="dv" style="left:1303.0px"></div><div class="dvh" style="left:1303.0px"></div>
<div id="sb">
 <div class="sbb" style="top:0"><svg style="position:absolute;left:4px;top:6px" width="10" height="6"><path d="M0 6L5 0L10 6z" fill="#000"/></svg></div>
 <div id="thumb"></div>
 <div class="sbb" style="top:990px"><svg style="position:absolute;left:4px;top:6px" width="10" height="6"><path d="M0 0L5 6L10 0z" fill="#000"/></svg></div>
</div>
<div id="footer">
 <div class="fb" style="left:1250px;width:84px;background:linear-gradient(#c2c6c6,#b4b8b8);border:1.5px solid #929696;color:#f6f6f6;letter-spacing:-0.1px">Anterior</div>
 <div class="fb" style="left:1346.6px;width:84px;background:linear-gradient(#6e7070,#545656);border:1px solid #4a4c4c">Siguiente</div>
 <svg style="position:absolute;left:1440px;top:9px" width="26" height="24"><path d="M1 23L24 1M9 23L24 9M17 23L24 16" stroke="#8a8e8e" stroke-width="1.5"/><path d="M2 23.5L25 1.5M10 23.5L25 9.5M18 23.5L25 16.5" stroke="#e8e8e8" stroke-width="1"/></svg>
</div>
</body></html>
